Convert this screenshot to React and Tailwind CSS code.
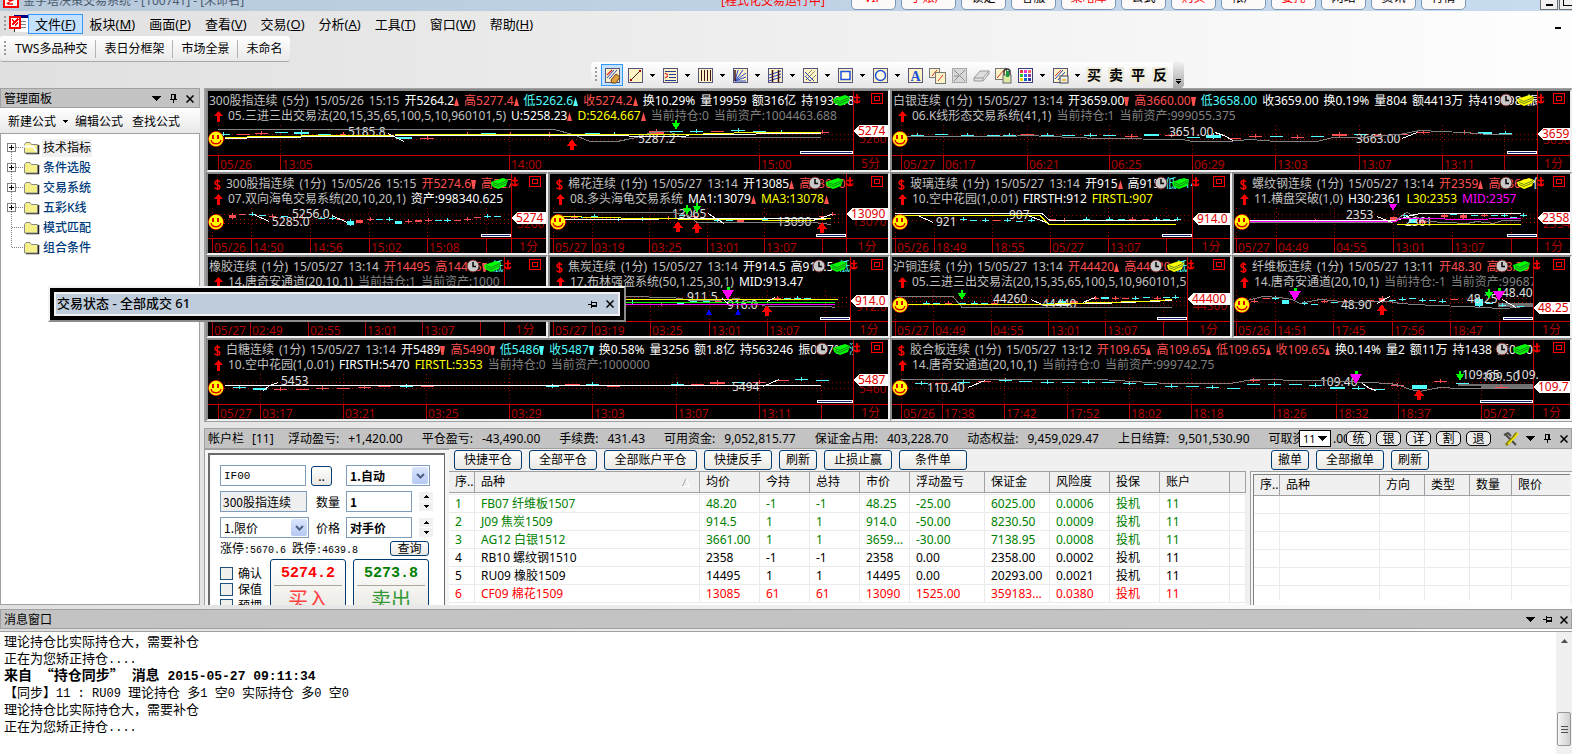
import React from "react";

const UI = "font-['Noto_Sans','Noto_Sans_CJK_SC',sans-serif]";
const SONG = "font-['Noto_Sans_CJK_SC',sans-serif]";

const R = "#ff5050";
const C = "#50ffff";
const W = "#ffffff";
const Y = "#ffff00";
const G = "#c0c0c0";
const D = "#808080";
const M = "#ff00ff";

/* ---------- small glyphs ---------- */

function Caret({ className = "" }) {
  return (
    <svg width="9" height="5" viewBox="0 0 9 5" className={className} shapeRendering="crispEdges">
      <path d="M0 0h9L4.500 5z" fill="#000" />
    </svg>
  );
}

function SmallCaret() {
  return (
    <svg width="5" height="3" viewBox="0 0 5 3" shapeRendering="crispEdges">
      <path d="M0 0h5L2.500 3z" fill="#000" />
    </svg>
  );
}

function Pin({ side = false }) {
  return (
    <svg width="9" height="9" viewBox="0 0 9 9" shapeRendering="crispEdges" className={side ? "rotate-90" : ""}>
      <path d="M2 0h5v5h1v1H5v3H4V6H1V5h1zM3 1v4h2V1z" fill="#000" fillRule="evenodd" />
    </svg>
  );
}

function Cross() {
  return (
    <svg width="8" height="8" viewBox="0 0 8 8">
      <path d="M0.500 0.500l7 7M7.500 0.500l-7 7" stroke="#000" strokeWidth="1.500" />
    </svg>
  );
}

function Grip({ className = "" }) {
  return (
    <svg width="3" height="16" viewBox="0 0 3 16" className={className} shapeRendering="crispEdges">
      {[0, 4, 8, 12].map((y) => (
        <rect key={y} x="0" y={y} width="2" height="2" fill="#9a9a9a" />
      ))}
    </svg>
  );
}

function PanelButtons({ side = false }) {
  return (
    <div className="flex items-center gap-2">
      <button aria-label="菜单"><Caret className="block" /></button>
      <button aria-label="固定"><Pin side={side} /></button>
      <button aria-label="关闭"><Cross /></button>
    </div>
  );
}

/* ---------- title bar ---------- */

const TITLE_BUTTONS = [
  ["VIP", true, false],
  ["子账户", true, true],
  ["锁定", false, false],
  ["客服", false, false],
  ["策略库", true, true],
  ["公式", false, false],
  ["购买", true, false],
  ["帐户", false, false],
  ["委托", true, false],
  ["网站", false, false],
  ["资讯", false, false],
  ["行情", false, false],
];

function TitleBar() {
  return (
    <header className="flex h-[11px] shrink-0 items-end justify-between overflow-hidden bg-linear-to-r from-[#b7c9db] to-[#c8dcf0] pb-px">
      <div className="flex items-end gap-1 pl-[3px]">
        <svg width="16" height="16" viewBox="0 0 16 16" className="mb-[2px] shrink-0">
          <rect x="1" y="1" width="14" height="14" fill="#fff" stroke="#f00" strokeWidth="2" />
          <path d="M4 12L11 5M4 6l3 3 5-2M5 12h5" stroke="#f00" strokeWidth="1.500" fill="none" />
        </svg>
        <h1 className="text-[12px] leading-[18px] whitespace-nowrap text-[#4a5a6c]">金字塔决策交易系统 - [100741] - [未命名]</h1>
      </div>
      <div className="flex items-end">
        <span className="mr-[26px] text-[12px] leading-[18px] whitespace-nowrap text-[#f00]">[程式化交易运行中]</span>
        <div className="mr-[74px] flex gap-[5px]">
          {TITLE_BUTTONS.map(([t, red, wide]) => (
            <button
              key={t}
              className={`h-[20px] rounded-[5px] border border-[#7b98b6] bg-[#fffafa] pb-1 text-[12px] leading-[14px] ${red ? "text-[#f00]" : "text-black"} ${wide ? "w-[55px]" : "w-[45px]"}`}
            >
              {t}
            </button>
          ))}
        </div>
        <div className="flex gap-px">
          <button aria-label="最小化" className="flex h-[18px] w-[18px] items-end justify-center border border-[#707070] bg-[#f0f0f0] pb-[3px]">
            <span className="h-[2px] w-[7px] bg-black" />
          </button>
          <button aria-label="还原" className="flex h-[18px] w-[13px] items-end justify-end overflow-hidden border border-r-0 border-[#707070] bg-[#f0f0f0] pb-[3px]">
            <span className="h-[7px] w-[9px] border border-r-0 border-black" />
          </button>
        </div>
      </div>
    </header>
  );
}

/* ---------- menus ---------- */

const MENUS = [
  ["文件", "F"], ["板块", "M"], ["画面", "P"], ["查看", "V"], ["交易", "O"],
  ["分析", "A"], ["工具", "T"], ["窗口", "W"], ["帮助", "H"],
];

function MenuBar() {
  return (
    <nav className="flex h-[25px] shrink-0 items-center pl-[4px]">
      <Grip />
      <svg width="19" height="17" viewBox="0 0 19 17" className="ml-[2px]" shapeRendering="crispEdges">
        <rect x="5" y="0" width="14" height="17" fill="#fff" stroke="#333" />
        <rect x="5" y="0" width="14" height="3" fill="#000080" />
        <path d="M12 6h5M12 9h5M12 12h5" stroke="#808080" />
        <rect x="1" y="2" width="10" height="11" fill="#fff" stroke="#f00" strokeWidth="2" />
        <path d="M3 10l6-6M3 5l3 2M6 10l3-2" stroke="#f00" strokeWidth="1.500" />
      </svg>
      {MENUS.map(([t, k], i) => (
        <button
          key={t}
          className={`h-[20px] border px-[6px] text-[13px] leading-[16px] whitespace-nowrap ${i === 0 ? "border-[#3399ff] bg-[#c4e1ff]" : "border-transparent"}`}
        >
          {t}(<u>{k}</u>)
        </button>
      ))}
      <span className="mt-[8px] mr-[11px] ml-auto h-[2px] w-[6px] bg-black" />
    </nav>
  );
}

function PageTabs() {
  const tabs = ["TWS多品种交", "表日分框架", "市场全景", "未命名"];
  return (
    <div className="flex h-[26px] shrink-0">
      <div className="flex items-center rounded-[3px] border-b border-[#a8a8a8] bg-linear-to-b from-white to-[#e9e9e9] pl-[4px]">
        <Grip />
        {tabs.map((t, i) => (
          <button
            key={t}
            className={`h-[18px] px-2 text-[12px] leading-[16px] whitespace-nowrap ${i > 0 ? "border-l border-[#b4b4b4]" : ""}`}
          >
            {t}
          </button>
        ))}
      </div>
    </div>
  );
}

/* ---------- drawing toolbar ---------- */

function Tool({ kind }) {
  const navy = "#3c3c78";
  const frame = <rect x="1.500" y="1.500" width="14" height="14" fill="#fdf3c4" stroke="#55557f" />;
  let art = null;
  switch (kind) {
    case "pencil":
      art = (<>{frame}<path d="M3 11l7-8M5 12l8-9" stroke="#2244cc" /><path d="M3 8l5-5" stroke="#e03030" strokeWidth="1.500" /><path d="M7 13l5-6 4 3-4 6H8z" fill="#e0a040" stroke="#6b4010" /></>);
      break;
    case "line":
      art = (<>{frame}<path d="M4 13L13 4" stroke="#402020" /><rect x="3" y="12" width="2" height="2" fill="#a00" /><rect x="12" y="3" width="2" height="2" fill="#a00" /></>);
      break;
    case "list":
      art = (<>{frame}<path d="M3 4.500h11M7 7.500h7M7 10.500h7M3 13.500h11" stroke="#223a9c" /><path d="M3 6l3 2M3 11l3-2" stroke="#e03030" strokeWidth="1.500" /></>);
      break;
    case "bars":
      art = (<>{frame}<path d="M4.500 3v11M7.500 3v11M10.500 3v11M13.500 3v11" stroke="#401018" /></>);
      break;
    case "fan":
      art = (<>{frame}<path d="M3 14L6 3M3 14L11 3M3 14L14 6M3 14l11-4M3 14h11" stroke="#2244cc" /><path d="M3 14L3 3" stroke="#401018" strokeWidth="1.500" /></>);
      break;
    case "grid":
      art = (<>{frame}<path d="M2 8l12-4M2 11l12-4M2 14l12-4" stroke="#2244cc" /><path d="M5.500 3v12M11.500 3v12" stroke="#401018" strokeWidth="1.500" /></>);
      break;
    case "hatch":
      art = (<>{frame}<path d="M3 10l7-7M4 13l9-9M8 14l6-6" stroke="#555" strokeDasharray="2 1" /><path d="M3 5l9 9M3 9l5 5" stroke="#2244cc" /></>);
      break;
    case "rect":
      art = (<>{frame}<rect x="4" y="4.500" width="9" height="8" fill="#fffbe6" stroke="#2050e0" strokeWidth="1.500" /></>);
      break;
    case "circle":
      art = (<>{frame}<circle cx="8.500" cy="8.500" r="5" fill="#fffbe6" stroke="#2050e0" strokeWidth="1.500" /></>);
      break;
    case "text":
      art = (<>{frame}<text x="8.500" y="13.500" textAnchor="middle" fontSize="14" fontWeight="bold" fill="#2050e0" className="font-['Liberation_Serif',serif]">A</text></>);
      break;
    case "copy":
      art = (<><rect x="0.500" y="1.500" width="10" height="9" fill="#fdf3c4" stroke="#777" /><path d="M3 9l5-6" stroke="#e03030" /><rect x="6.500" y="5.500" width="10" height="11" fill="#fdf3c4" stroke="#777" /><path d="M9 14l5-6" stroke="#e03030" /></>);
      break;
    case "delete":
      art = (<><rect x="1.500" y="1.500" width="14" height="14" fill="#d8d8d8" stroke="#a8a8a8" /><path d="M3 3l11 11M14 3L3 14M3 9h5" stroke="#8c8c8c" /></>);
      break;
    case "eraser":
      art = (<path d="M1 11l6-7h9l-6 7zM1 11v3h9v-3M10 14l6-7V4" fill="#dedede" stroke="#999" />);
      break;
    case "lock":
      art = (<><rect x="0.500" y="1.500" width="11" height="11" fill="#fdf3c4" stroke="#777" /><path d="M2 11l7-8" stroke="#e03030" /><path d="M9 9V5a3 3 0 016 0v4" fill="none" stroke="#333" strokeWidth="1.500" /><rect x="8" y="8" width="8" height="8" fill="#dfe8a0" stroke="#667" /><rect x="11" y="4" width="3" height="6" fill="#1a9a3a" /></>);
      break;
    case "palette":
      art = (<><rect x="1.500" y="1.500" width="14" height="14" fill="#fff" stroke={navy} />{[["#e33", "#e3c", "#f66"], ["#3b3", "#36e", "#939"], ["#fc0", "#06c", "#33a"]].flatMap((r, j) => r.map((c, i) => <rect key={`${i}${j}`} x={3 + i * 4} y={3 + j * 4} width="3" height="3" fill={c} />))}</>);
      break;
    default:
      art = (<>{frame}<path d="M3 12l8-9M6 13l7-8" stroke="#2244cc" /><path d="M3 9l6-6" stroke="#e03030" /><rect x="8" y="9" width="8" height="7" fill="#eee" stroke="#444" /><rect x="10" y="12" width="4" height="2" fill="#f0c040" /></>);
  }
  return <svg width="17" height="17" viewBox="0 0 17 17">{art}</svg>;
}

const TOOLS = [
  ["line", true], ["list", true], ["bars", true], ["fan", true], ["grid", true], ["hatch", true],
  ["rect", true], ["circle", true], ["text", false], ["copy", false], ["delete", false],
  ["eraser", false], ["lock", false], ["palette", true], ["save", true],
];

function DrawToolbar() {
  return (
    <div className="flex h-[26px] shrink-0 justify-end pr-[388px]">
      <div className="flex items-center overflow-hidden rounded-[4px] bg-linear-to-b from-white to-[#e6e6e6] pl-[4px]">
        <Grip />
        <button aria-label="pencil" className="ml-[3px] flex h-[22px] w-[22px] items-center justify-center border border-[#3399ff] bg-[#c4e1ff]">
          <Tool kind="pencil" />
        </button>
        {TOOLS.map(([k, drop]) => (
          <button key={k} aria-label={k} className={`flex h-[22px] items-center pl-[4px] ${drop ? "w-[35px] gap-[6px]" : "w-[22px]"}`}>
            <Tool kind={k} />
            {drop && <SmallCaret />}
          </button>
        ))}
        {["买", "卖", "平", "反"].map((t) => (
          <button key={t} className="flex h-[22px] w-[22px] items-center justify-center">
            <span className="h-[16px] w-[16px] bg-[#efecdc] text-center text-[14px] leading-[16px] font-bold">{t}</span>
          </button>
        ))}
        <button aria-label="更多" className="ml-[2px] flex h-full w-[11px] flex-col items-center justify-end gap-px bg-linear-to-b from-[#f0f0f0] to-[#a8a8a8] pb-1">
          <span className="h-px w-[5px] bg-black" />
          <SmallCaret />
        </button>
      </div>
    </div>
  );
}

/* ---------- management panel ---------- */

const TREE = [
  ["技术指标", true, true],
  ["条件选股", true, false],
  ["交易系统", true, false],
  ["五彩K线", true, false],
  ["模式匹配", false, false],
  ["组合条件", false, false],
];

function Folder({ open }) {
  return (
    <svg width="17" height="14" viewBox="0 0 17 14">
      <path d="M3 12.500h12.500V4" fill="none" stroke="#222" strokeWidth="1.500" />
      <path d="M1.500 12V3.500l1.500-2h4l1.500 2h6V12z" fill="#f5f08a" stroke="#8a8a8a" />
      {open && <path d="M1 5.500h9l3.500 5" fill="none" stroke="#fff" strokeWidth="2" />}
    </svg>
  );
}

function SidePanel() {
  return (
    <aside className="flex w-[200px] shrink-0 flex-col">
      <div className="flex h-[20px] items-center justify-between border border-[#a0a0a0] bg-[#c3c3c3] pt-px pr-[5px] pl-[3px] text-[12px]">
        <h2>管理面板</h2>
        <PanelButtons />
      </div>
      <div className="flex h-[25px] items-center bg-linear-to-b from-white to-[#e8e8e8] pt-[2px] pl-2 text-[12px]">
        <button>新建公式</button>
        <button aria-label="新建选项" className="mr-[7px] ml-[7px]"><SmallCaret /></button>
        <button>编辑公式</button>
        <button className="ml-[9px]">查找公式</button>
      </div>
      <ul className="min-h-0 flex-1 border border-[#a0a0a0] bg-white pt-[4px] text-[12px]">
        {TREE.map(([t, exp, sel], i) => (
          <li key={t} className="flex h-[20px] items-center">
            <svg width="22" height="20" viewBox="0 0 22 20" className="shrink-0" shapeRendering="crispEdges">
              <path d={`M10.500 ${i === 0 ? 10 : 0}V${i === TREE.length - 1 ? 10 : 20}M11 9.500h11`} stroke="#808080" strokeDasharray="1 1" fill="none" />
              {exp && (<><rect x="6.500" y="5.500" width="8" height="8" fill="#fff" stroke="#808080" /><path d="M8 9.500h5M10.500 7v5" stroke="#000" /></>)}
            </svg>
            <Folder open={sel} />
            <span className={`ml-[2px] px-[1px] leading-[18px] ${sel ? "bg-[#f0f0f0] text-black" : "font-medium text-[#003c7c]"}`}>{t}</span>
          </li>
        ))}
      </ul>
    </aside>
  );
}

/* ---------- charts ---------- */

// Candle rows: [x, y, colour key, width?, height?]
const SYS53 = "05.三进三出交易法(20,15,35,65,100,5,10,960101,5)";

const PANES = [
  {
    id: "if5", wide: true, w: 684, line: 647, unit: "5分", bar: 53, tag: ["5274", 42], ghost: ["5260", 50], book: "#00ff00",
    head: [["300股指连续", G], ["(5分)", G], ["15/05/26", G], ["15:15", G], ["开5264.2", W, "u"], ["高5277.4", R, "u"], ["低5262.6", C, "u", C], ["收5274.2", R, "u"], ["换10.29%", W], ["量19959", W], ["额316亿", W], ["持193918", W]],
    sub: [[SYS53, G], ["U:5258.23", W, "u"], ["D:5264.667", Y, "u"], ["当前持仓:0", D], ["当前资产:1004463.688", D]],
    ticks: [[12, "05/26"], [74, "13:05"], [303, "14:00"], [553, "15:00"]],
    grid: [45, 50],
    lines: [
      [D, "12,40 348,40 367,45 384,52 411,52 431,48 442,44 452,42 463,42 474,47 477,48 615,48"],
      [W, "19,49 64,48 127,47 252,46 367,46 478,47 485,45 615,44"],
      [Y, "19,48 64,47 127,46 252,45 454,45 482,45 544,43 615,43"],
      [W, "182,44 198,52"],
    ],
    candles: [[17, 45, "c"], [37, 45, "r"], [55, 44, "r"], [75, 43, "c"], [95, 43, "c", 15, 2], [118, 45, "c"], [137, 45, "r", 6], [198, 48, "c", 16, 2], [221, 49, "r", 14], [238, 45, "r"], [261, 45, "r"], [282, 44, "c", 15], [304, 45, "r"], [324, 45, "r"], [343, 45, "r", 15, 2], [386, 44, "c", 15, 2], [408, 45, "c", 6], [428, 45, "r"], [450, 42, "r", 15, 3], [470, 42, "c"], [490, 42, "c"], [511, 42, "r"], [532, 41, "c", 14], [553, 42, "c"], [575, 43, "c"], [594, 43, "r"], [616, 43, "r"]],
    labels: [["5185.8", 142, 43], ["5287.2", 432, 50]],
    marks: [["ru", 366, 56], ["gd", 470, 36]],
  },
  {
    id: "ag", wide: true, w: 682, line: 647, unit: "1分", bar: 30, tag: ["3659", 45], ghost: ["3650", 51], book: "#ffff00", clock: true,
    head: [["白银连续", G], ["(1分)", G], ["15/05/27", G], ["13:14", G], ["开3659.00", W, "d"], ["高3660.00", R, "d"], ["低3658.00", C], ["收3659.00", W], ["换0.19%", W], ["量804", W], ["额4413万", W], ["持419198", W], ["振", W]],
    sub: [["06.K线形态交易系统(41,1)", G], ["当前持仓:1", D], ["当前资产:999055.375", D]],
    ticks: [[11, "05/27"], [53, "06:17"], [137, "06:21"], [219, "06:25"], [302, "06:29"], [385, "13:03"], [469, "13:07"], [552, "13:11"], [614, ""]],
    grid: [45, 50],
    lines: [
      [D, "13,47 117,47 137,46 183,48 210,49 293,50 302,52 337,52 360,50 387,52 427,52 443,48 470,48 510,45 530,41 573,43 600,45 622,45"],
      [W, "325,43 334,46 343,51"],
      [W, "512,49 527,43"],
    ],
    candles: [[27, 46, "c"], [51, 45, "c"], [77, 46, "c"], [103, 46, "c"], [119, 46, "c"], [137, 45, "r"], [157, 46, "c"], [178, 46, "c"], [200, 46, "c"], [219, 46, "c"], [241, 47, "r"], [261, 45, "c", 15, 2], [281, 46, "r"], [303, 48, "c"], [323, 46, "c", 15, 3], [344, 49, "r"], [365, 47, "r"], [386, 47, "c"], [407, 48, "r"], [427, 47, "c"], [449, 45, "r", 15, 2], [470, 45, "c"], [490, 46, "r"], [511, 45, "r"], [533, 43, "r"], [553, 42, "c"], [574, 43, "r"], [595, 43, "c", 14, 2], [615, 44, "c"]],
    labels: [["3651.00", 279, 43], ["3663.00", 466, 50]],
    marks: [],
  },
  {
    id: "if1", w: 342, dollar: true, line: 305, unit: "1分", bar: 30, tag: ["5274", 46], ghost: ["5260", 52], book: "#00ff00",
    head: [["300股指连续", G], ["(1分)", G], ["15/05/26", G], ["15:15", G], ["开5274.6", R, "d"], ["高5277", R]],
    sub: [["07.双向海龟交易系统(20,10,20,1)", G], ["资产:998340.625", W]],
    ticks: [[6, "05/26"], [45, "14:50"], [104, "14:56"], [163, "15:02"], [221, "15:08"], [280, ""]],
    grid: [42, 47, 51],
    lines: [[W, "48,42 63,49"], [W, "126,43 141,50"]],
    candles: [[26, 43, "r", 7, 3], [36, 42, "r"], [46, 42, "c"], [56, 43, "c"], [66, 44, "r"], [78, 44, "c"], [96, 45, "r"], [115, 46, "c"], [126, 46, "c"], [134, 47, "r"], [144, 49, "c", 7, 4], [153, 48, "r", 7, 3], [164, 47, "r"], [173, 47, "c"], [183, 47, "c"], [192, 49, "c", 7, 3], [202, 49, "r"], [212, 48, "r", 7, 2], [222, 48, "r"], [232, 48, "c"], [241, 48, "c"], [251, 48, "r"], [261, 47, "r"], [271, 45, "r"], [281, 44, "c"], [291, 44, "c"]],
    labels: [["5256.0", 86, 42], ["5285.0", 66, 50]],
    marks: [],
  },
  {
    id: "cf", w: 342, dollar: true, line: 298, unit: "1分", bar: 30, tag: ["13090", 42], ghost: ["13070", 50], book: "#00ff00", clock: true,
    head: [["棉花连续", G], ["(1分)", G], ["15/05/27", G], ["13:14", G], ["开13085", W, "u"], ["高13090", R, "u"]],
    sub: [["08.多头海龟交易系统", G], ["MA1:13079", W, "u"], ["MA3:13078", Y, "u"]],
    ticks: [[5, "05/27"], [44, "03:19"], [101, "03:25"], [159, "13:01"], [216, "13:07"], [274, ""]],
    grid: [42, 46, 50],
    lines: [
      [D, "5,40 124,40 140,43 149,50 265,50 283,52"],
      [W, "15,47 92,47 130,46 283,46"],
      [Y, "15,44 92,46 165,47 262,48 283,46"],
      [W, "160,41 176,51"],
      [W, "265,48 284,42"],
    ],
    candles: [[26, 45, "r"], [36, 45, "c"], [46, 44, "c"], [58, 45, "r"], [70, 47, "c"], [82, 47, "c"], [94, 47, "c"], [104, 46, "c"], [120, 46, "r"], [134, 43, "c"], [146, 44, "r"], [158, 46, "r"], [169, 48, "c"], [181, 48, "c"], [192, 48, "r", 7, 2], [204, 47, "r"], [216, 47, "c"], [228, 48, "c"], [240, 48, "c"], [274, 44, "r"], [284, 42, "r"]],
    labels: [["13065", 124, 42], ["13090", 229, 50]],
    marks: [["gd", 139, 38], ["gd", 149, 36], ["ru", 130, 55], ["ru", 149, 56], ["ru", 274, 56]],
  },
  {
    id: "fg", w: 342, dollar: true, line: 302, unit: "1分", bar: 30, tag: ["914.0", 47], book: "#00ff00", clock: true,
    head: [["玻璃连续", G], ["(1分)", G], ["15/05/27", G], ["13:14", G], ["开915", W, "u"], ["高915", W], ["低914", C]],
    sub: [["10.空中花园(1,0.01)", G], ["FIRSTH:912", W], ["FIRSTL:907", Y]],
    ticks: [[5, "05/26"], [44, "18:49"], [102, "18:55"], [160, "05/27"], [218, "13:07"], [276, ""]],
    grid: [43, 48],
    lines: [
      [W, "5,41 152,41 160,48 286,48"],
      [Y, "5,43 150,43 159,52 286,52"],
      [W, "28,43 43,50"],
      [W, "138,43 159,51"],
    ],
    candles: [[73, 47, "c"], [83, 48, "c"], [95, 48, "c"], [106, 48, "r"], [117, 48, "c"], [129, 49, "c"], [141, 48, "c"], [162, 47, "r"], [174, 48, "r"], [185, 48, "r"], [196, 47, "c"], [208, 48, "r"], [219, 47, "c"], [231, 47, "c"], [242, 47, "r"], [255, 47, "r"], [266, 47, "c"], [276, 47, "c"], [287, 47, "c"]],
    labels: [["921", 46, 50], ["907", 119, 43]],
    marks: [],
  },
  {
    id: "rb", w: 340, dollar: true, line: 305, unit: "1分", bar: 30, tag: ["2358", 46], ghost: ["2354", 52], book: "#ffff00", clock: true,
    head: [["螺纹钢连续", G], ["(1分)", G], ["15/05/27", G], ["13:14", G], ["开2359", R, "u"], ["高2360", R], ["低", W]],
    sub: [["11.横盘突破(1,0)", G], ["H30:2361", W], ["L30:2353", Y], ["MID:2357", M]],
    ticks: [[4, "05/27"], [44, "04:49"], [102, "04:55"], [161, "13:01"], [220, "13:07"], [279, ""]],
    grid: [42, 46, 50],
    lines: [
      [D, "15,50 160,50 175,40 195,49 235,51 245,49 262,51 270,48 289,48"],
      [W, "15,48 165,48 175,44 188,41 289,41"],
      [Y, "165,52 289,52"],
      [M, "15,49 163,49 168,46 200,46 225,47 289,46"],
      [W, "145,44 160,50"],
    ],
    candles: [[83, 49, "r"], [161, 45, "r", 7, 5], [172, 43, "c"], [181, 47, "c", 8, 4], [190, 48, "r", 7, 3], [202, 46, "r"], [212, 43, "r", 7, 2], [221, 42, "c"], [231, 43, "r", 7, 3], [242, 43, "c"], [252, 43, "r"], [262, 43, "c"], [272, 43, "c"], [281, 45, "c"], [291, 43, "c"]],
    labels: [["2353", 114, 43], ["2361", 173, 50]],
    marks: [["md", 161, 36]],
  },
  {
    id: "ru", w: 342, line: 298, unit: "1分", bar: 30, tag: ["14495", 44], book: "#00ff00", clock: true,
    head: [["橡胶连续", G], ["(1分)", G], ["15/05/27", G], ["13:14", G], ["开14495", R], ["高14495", R, "d"], ["低", C]],
    sub: [["14.唐奇安通道(20,10,1)", G], ["当前持仓:1", D], ["当前资产:1000", D]],
    ticks: [[6, "05/27"], [44, "02:49"], [102, "02:55"], [159, "13:01"], [216, "13:07"], [274, ""]],
    grid: [42, 48], lines: [[D, "6,42 280,42"]], candles: [], labels: [], marks: [],
  },
  {
    id: "j", w: 342, dollar: true, line: 302, unit: "1分", bar: 30, tag: ["914.0", 46], ghost: ["912.0", 52], book: "#00ff00", clock: true,
    head: [["焦炭连续", G], ["(1分)", G], ["15/05/27", G], ["13:14", G], ["开914.5", W], ["高914.5", W], ["低9", C]],
    sub: [["17.布林强盗系统(50,1.25,30,1)", G], ["MID:913.47", W]],
    ticks: [[5, "05/27"], [44, "03:19"], [102, "03:25"], [161, "13:01"], [219, "13:07"], [277, ""]],
    grid: [42, 47, 51],
    lines: [
      [D, "76,41 125,42 145,45 168,45 190,43 219,51 250,51 280,51 287,52"],
      [Y, "76,44 290,44"],
      ["#00ff00", "76,47 287,47"],
      [M, "76,49 287,49"],
      [W, "174,43 180,48"],
      [W, "219,46 227,42"],
    ],
    candles: [[84, 47, "c"], [98, 49, "r"], [113, 49, "r"], [132, 48, "c"], [145, 46, "c"], [158, 46, "c"], [170, 46, "r"], [219, 44, "r"], [229, 43, "r", 8, 2], [239, 43, "c"], [249, 43, "c"], [259, 43, "c"]],
    labels: [["911.5", 139, 42], ["916.0", 179, 50]],
    marks: [["md2", 180, 39], ["bu", 161, 57], ["bu", 190, 57], ["ru", 219, 56]],
  },
  {
    id: "cu", w: 342, line: 297, unit: "1分", bar: 30, tag: ["44400", 44], ghost: ["44300", 51], book: "#ffff00", clock: true,
    head: [["沪铜连续", G], ["(1分)", G], ["15/05/27", G], ["13:14", G], ["开44420", R, "u"], ["高44420", R], ["低", C]],
    sub: [[SYS53, G]],
    ticks: [[5, "05/27"], [43, "04:49"], [101, "04:55"], [158, "13:01"], [215, "13:07"], [273, ""]],
    grid: [42, 46, 50],
    lines: [
      [D, "5,41 63,41 72,52 282,52"],
      [W, "13,49 150,49 210,48 282,45"],
      [Y, "13,49 150,49 210,47 253,46 282,44"],
      [W, "141,44 152,49"],
      [W, "193,47 205,42"],
    ],
    candles: [[36, 48, "c"], [46, 48, "c"], [58, 48, "r"], [72, 48, "c"], [84, 48, "c"], [94, 48, "c"], [104, 48, "r"], [160, 48, "c"], [172, 46, "c", 8, 3], [184, 46, "r", 8, 3], [205, 43, "r"], [215, 42, "c", 8, 2], [225, 43, "r"], [235, 43, "r"], [245, 43, "c"], [256, 42, "c"], [267, 43, "r"], [276, 42, "c"], [285, 42, "c"]],
    labels: [["44260", 103, 44], ["44440", 152, 49]],
    marks: [["gd", 72, 40]],
  },
  {
    id: "fb", w: 340, dollar: true, line: 301, unit: "1分", bar: 30, tag: ["48.25", 53], book: "#00ff00", clock: true,
    head: [["纤维板连续", G], ["(1分)", G], ["15/05/27", G], ["13:11", G], ["开48.30", R], ["高48.30", R], ["低4", C]],
    sub: [["14.唐奇安通道(20,10,1)", G], ["当前持仓:-1", D], ["当前资产:99687", D]],
    ticks: [[4, "05/26"], [43, "14:51"], [101, "17:45"], [160, "17:56"], [218, "18:47"], [267, ""]],
    grid: [43, 47],
    block: [[266, 48, 35, 4]],
    lines: [
      [D, "5,46 15,45 31,41 48,42 60,44 68,48 88,44 101,45 115,47 158,46 168,48 201,50 235,51 268,53 288,52"],
      [W, "145,48 158,41"],
      [W, "270,44 284,52"],
    ],
    candles: [[22, 46, "r"], [34, 43, "r"], [43, 43, "c"], [53, 45, "c", 7, 4], [72, 48, "c"], [82, 49, "c"], [92, 46, "r"], [102, 47, "c"], [112, 46, "r"], [138, 45, "r"], [150, 43, "r", 6, 4], [160, 45, "c"], [170, 44, "c"], [180, 43, "c"], [190, 45, "c"], [200, 45, "c"], [210, 46, "c"], [222, 44, "r"], [247, 44, "c", 8, 7], [257, 48, "c"], [270, 50, "c"], [288, 51, "c"]],
    labels: [["48.90", 109, 50], ["48.25", 235, 44], ["48.40", 270, 38]],
    marks: [["md2", 63, 40], ["ru", 150, 55], ["gd", 257, 39], ["md2", 267, 40]],
  },
  {
    id: "sr", wide: true, w: 684, dollar: true, line: 647, unit: "1分", bar: 36, tag: ["5487", 42], ghost: ["5460", 51], book: "#00ff00", clock: true,
    head: [["白糖连续", G], ["(1分)", G], ["15/05/27", G], ["13:14", G], ["开5489", W, "d"], ["高5490", R, "d"], ["低5486", C, "d", C], ["收5487", C, "d", C], ["换0.58%", W], ["量3256", W], ["额1.8亿", W], ["持563246", W], ["振0.67%", W], ["涨", C]],
    sub: [["10.空中花园(1,0.01)", G], ["FIRSTH:5470", W], ["FIRSTL:5353", Y], ["当前持仓:0", D], ["当前资产:1000000", D]],
    ticks: [[12, "05/27"], [54, "03:17"], [137, "03:21"], [220, "03:25"], [303, "03:29"], [386, "13:03"], [470, "13:07"], [553, "13:11"], [615, ""]],
    grid: [44, 50],
    lines: [[W, "19,47 615,47"], [W, "57,52 64,47 72,44"], [W, "557,48 573,41"]],
    candles: [[33, 49, "c"], [54, 50, "c", 14, 2], [74, 51, "r"], [96, 51, "r"], [116, 50, "r"], [137, 50, "r"], [158, 49, "r"], [178, 48, "r"], [200, 48, "c"], [221, 48, "r"], [346, 48, "c"], [366, 46, "r", 15, 2], [386, 46, "c"], [407, 48, "r"], [471, 46, "c"], [491, 46, "r"], [511, 44, "r", 15, 2], [532, 44, "c"], [553, 44, "r"], [576, 42, "r"], [595, 41, "c"], [616, 42, "c"]],
    labels: [["5453", 75, 43], ["5494", 526, 49]],
    marks: [],
  },
  {
    id: "bb", wide: true, w: 682, dollar: true, line: 643, unit: "1分", bar: 53, tag: ["109.7", 49], book: "#00ff00", clock: true,
    head: [["胶合板连续", G], ["(1分)", G], ["15/05/27", G], ["13:12", G], ["开109.65", R, "u"], ["高109.65", R, "u"], ["低109.65", R, "u"], ["收109.65", R, "u"], ["换0.14%", W], ["量2", W], ["额11万", W], ["持1438", W], ["振0.00%", W]],
    sub: [["14.唐奇安通道(20,10,1)", G], ["当前持仓:0", D], ["当前资产:999742.75", D]],
    ticks: [[11, "05/26"], [52, "17:38"], [114, "17:42"], [177, "17:52"], [239, "18:02"], [301, "18:18"], [384, "18:26"], [446, "18:32"], [508, "18:37"], [591, "05/27"]],
    grid: [44, 50],
    block: [[568, 46, 75, 2], [591, 46, 52, 5]],
    lines: [
      [D, "11,41 95,41 210,41 277,45 340,45 363,41 423,42 477,44 500,45 510,47 520,51 530,53 550,49 570,50 643,50"],
      [W, "78,49 95,42"],
      [W, "472,45 480,50 486,52"],
    ],
    candles: [[31, 45, "c"], [51, 45, "r"], [73, 44, "c"], [94, 43, "r"], [115, 42, "c"], [135, 43, "c"], [157, 44, "c"], [178, 44, "c"], [198, 44, "c"], [218, 44, "c"], [239, 45, "c"], [260, 46, "c"], [281, 48, "c"], [302, 48, "c"], [322, 49, "c"], [343, 50, "c"], [363, 42, "r"], [363, 46, "c"], [384, 46, "c"], [405, 46, "c"], [425, 47, "c"], [447, 49, "c", 15, 2], [468, 50, "c"], [488, 51, "c"], [507, 47, "r"], [529, 47, "c", 15, 4], [550, 43, "r"], [572, 45, "c"], [611, 49, "r"]],
    labels: [["110.40", 37, 50], ["109.40", 430, 44], ["109.65", 572, 37], ["109.50", 592, 39], ["109.", 625, 37]],
    marks: [["md2", 466, 40], ["ru", 529, 57], ["gd", 570, 38]],
  },
];

function Trend({ dir, color = R }) {
  return (
    <svg width="5" height="9" viewBox="0 0 5 9" className="inline-block shrink-0">
      {dir === "u" ? <path d="M2.500 0L5 9H0z" fill={color} /> : <path d="M0 0h5L3.500 9h-2z" fill={color} />}
    </svg>
  );
}

function Quote({ items }) {
  return items.map(([t, color, dir, dc], i) => (
    <span key={i} className="inline-flex shrink-0 items-center whitespace-nowrap" style={{ color }}>
      {t}
      {dir && <Trend dir={dir} color={dc} />}
    </span>
  ));
}

function Mark({ kind, x, y }) {
  if (kind === "ru") return <path d={`M${x} ${y - 6}l5 7h-3v4h-4v-4h-3z`} fill="#f00" />;
  if (kind === "bu") return <path d={`M${x} ${y - 3}l3 6h-6z`} fill="#00f" />;
  if (kind === "gd") return <path d={`M${x - 1} ${y - 5}h2v3h3l-4 7-4-7h3z`} fill="#0f0" />;
  if (kind === "md") return <path d={`M${x - 4} ${y - 4}h8l-4 7z`} fill={M} />;
  return (
    <g>
      <rect x={x - 1} y={y - 7} width="3" height="3" fill="#0f0" />
      <path d={`M${x - 6} ${y - 4}h12l-6 10z`} fill={M} />
    </g>
  );
}

function Smiley() {
  return (
    <g shapeRendering="auto">
      <circle cx="10" cy="50" r="7.500" fill="#ff0" stroke="#f00" strokeDasharray="2 1" />
      <rect x="6" y="46" width="2" height="4" fill="#d00" />
      <rect x="11" y="46" width="2" height="4" fill="#d00" />
      <path d="M5 51c1 5 9 5 10 0" stroke="#d00" fill="none" strokeWidth="1.300" />
    </g>
  );
}

function ChartPane({ p }) {
  const dw = p.wide ? 13 : 7;
  const right = p.w - 2;
  return (
    <article className={`relative h-[83px] min-w-0 overflow-hidden border-t-2 border-r-2 border-b-2 border-l-2 border-t-[#8a8a8a] border-r-[#f0f0f0] border-b-[#f0f0f0] border-l-[#8a8a8a] bg-black text-[12px] ${p.wide ? "col-span-2" : ""}`}>
      <svg width={p.w - 2} height="81" viewBox={`2 2 ${p.w - 2} 81`} className="absolute top-0 left-0" shapeRendering="crispEdges">
        {p.grid.map((y) => (
          <path key={y} d={`M10 ${y + 0.5}H${p.line}`} stroke="#a00000" strokeDasharray="1 3" />
        ))}
        {p.ticks.map(([x, t]) => (
          <g key={x}>
            <path d={`M${x + 0.5} 36V66`} stroke="#a00000" strokeDasharray="1 3" />
            <path d={`M${x + 0.5} 66V82`} stroke="#b80000" />
            {t && <text x={x + 2} y="80" fill="#b00000">{t}</text>}
          </g>
        ))}
        <path d={`M2 66.500H${right}M${p.line + 0.5} 2V82`} stroke="#c80000" />
        {(p.block || []).map(([x, y, w, h]) => (
          <rect key={x} x={x} y={y} width={w} height={h} fill="#707070" />
        ))}
        {p.candles.map(([x, y, c, w = dw, h = 1], i) => (
          <g key={i} fill={c === "c" ? C : R}>
            <rect x={x - (w >> 1)} y={y} width={w} height={h} />
            {i % 2 === 0 && <rect x={x} y={y - 2} width="1" height={h + 3} />}
          </g>
        ))}
        {p.labels.map(([t, x, y]) => (
          <text key={t + x} x={x} y={y + 4} fill="#e0e0e0">{t}</text>
        ))}
        {p.lines.map(([c, pts], i) => (
          <polyline key={i} points={pts} transform="translate(0 0.5)" stroke={c} fill="none" />
        ))}
        {p.marks.map(([k, x, y], i) => (
          <Mark key={i} kind={k} x={x} y={y} />
        ))}
        <Smiley />
        <rect x={p.line - p.bar} y="62" width={p.bar} height="3" fill="#fff" />
        <rect x={p.line - p.bar + 1} y="63" width={p.bar - 2} height="1" fill="#10206c" />
        {p.ghost && <text x={p.line + 6} y={p.ghost[1] + 4} fill="#a00000">{p.ghost[0]}</text>}
        <path d={`M${p.line} ${p.tag[1]}l6-6H${right}v12H${p.line + 6}z`} fill="#fff" />
        <text x={p.line + 5} y={p.tag[1] + 4} fill="#e00000">{p.tag[0]}</text>
        <text x={(p.line + right) / 2} y="79" textAnchor="middle" fill="#b00000">{p.unit}</text>
      </svg>
      <div className="flex h-[18px] items-center gap-[5px] overflow-hidden pt-[2px] pl-px" style={{ width: p.line - 2 }}>
        {p.dollar && (
          <svg width="10" height="13" viewBox="0 0 10 13" className="ml-[3px] -mr-px shrink-0">
            <path d="M8 4C7 2 2.500 2.500 3 5s5 1.500 5 4-4.500 2.500-5.500 0.500M5.500 1v11" stroke="#f00" fill="none" strokeWidth="1.400" />
          </svg>
        )}
        <Quote items={p.head} />
      </div>
      <div className="flex h-[14px] items-center gap-[5px] overflow-hidden pl-[6px]" style={{ width: p.line - 2 }}>
        <svg width="9" height="11" viewBox="0 0 9 11" className="shrink-0">
          <path d="M4.500 0L9 5H6v6H3V5H0z" fill="#f00" />
        </svg>
        <Quote items={p.sub} />
      </div>
      <svg width={p.w - 2} height="18" viewBox={`2 2 ${p.w - 2} 18`} className="absolute top-0 left-0">
        {p.clock && (
          <g>
            <circle cx={p.line - 31} cy="11" r="6" fill="#c8c8c8" stroke="#702020" />
            <path d={`M${p.line - 31} 7v4.500h3`} stroke="#000" fill="none" strokeWidth="1.500" />
          </g>
        )}
        <path d={`M${p.line - 20} 10l12-4 5 2-2 6-8 3-6-3z`} fill={p.book} />
        <path d={`M${p.line - 18} 12.500l5 2 9-4M${p.line - 18} 10.500l5 2 9-4`} stroke="#285028" fill="none" strokeWidth="0.700" />
        <path d={`M${p.line + 1} 8.500h6M${p.line + 4} 5v9M${p.line + 1} 11.500c1 3 5 3 6 0`} stroke="#f00" fill="none" strokeWidth="1.600" />
        <g fill="none" stroke="#f00" shapeRendering="crispEdges">
          <rect x={right - 16.5} y="4.500" width="11" height="10" />
          <rect x={right - 13.5} y="7.500" width="5" height="4" />
        </g>
      </svg>
    </article>
  );
}

/* ---------- account area ---------- */

const ACCOUNT = [
  ["浮动盈亏:", "+1,420.00"],
  ["平仓盈亏:", "-43,490.00"],
  ["手续费:", "431.43"],
  ["可用资金:", "9,052,815.77"],
  ["保证金占用:", "403,228.70"],
  ["动态权益:", "9,459,029.47"],
  ["上日结算:", "9,501,530.90"],
  ["可取资金:", ""],
];

function AccountBar() {
  return (
    <div className="flex h-[21px] shrink-0 items-center border border-[#a0a0a0] bg-[#c3c3c3] pr-[3px] pl-[3px] text-[12px]">
      <div className="flex min-w-0 flex-1 overflow-hidden whitespace-nowrap">
        <span className="w-[44px] shrink-0">帐户栏</span>
        <span className="w-[36px] shrink-0">[11]</span>
        <span className="flex gap-[19px]">
          {ACCOUNT.map(([k, v]) => (
            <span key={k} className="flex shrink-0 gap-[9px]">
              <span>{k}</span>
              <span>{v}</span>
            </span>
          ))}
        </span>
      </div>
      <div className="relative shrink-0">
        <select aria-label="帐户" className="block h-[17px] w-[32px] appearance-none border border-black bg-white pl-[3px] text-[11px] leading-[14px]">
          <option>11</option>
        </select>
        <Caret className="pointer-events-none absolute top-[6px] right-[4px]" />
      </div>
      <span className="w-[15px] shrink-0 overflow-hidden pl-[2px]">.00</span>
      <div className="flex shrink-0 gap-[5px]">
        {["统", "银", "详", "割", "退"].map((t) => (
          <button key={t} className="h-[15px] w-[25px] rounded-[5px] border border-black bg-[#ececec] text-[12px] leading-[12px]">{t}</button>
        ))}
      </div>
      <button aria-label="设置" className="mr-[7px] ml-[12px] shrink-0">
        <svg width="16" height="14" viewBox="0 0 16 14">
          <path d="M1 3l4-2 3 3M3 3l10 10" stroke="#4a4a4a" strokeWidth="2" fill="none" />
          <path d="M14 1l-3 4-8 8" stroke="#808000" strokeWidth="3" fill="none" />
          <path d="M15 1l-3 4-7 7" stroke="#ffee00" strokeWidth="1.500" fill="none" />
        </svg>
      </button>
      <PanelButtons />
    </div>
  );
}

const XP = "rounded-[3px] border border-[#003c74] bg-linear-to-b from-white to-[#e8e7e2] text-[12px]";
const BOX = "border border-[#7f9db9] bg-white";

function Spin({ label }) {
  return (
    <div className="flex w-[14px] flex-col gap-px">
      <button aria-label={`${label}增加`} className="flex h-[9px] items-center justify-center bg-[#f0f0f0]"><span className="rotate-180"><SmallCaret /></span></button>
      <button aria-label={`${label}减少`} className="flex h-[9px] items-center justify-center bg-[#f0f0f0]"><SmallCaret /></button>
    </div>
  );
}

function XpSelect({ label, value, className = "" }) {
  return (
    <div className="relative">
      <select aria-label={label} className={`block h-[21px] w-full appearance-none pl-[3px] text-[12px] leading-[16px] ${BOX} ${className}`}>
        <option>{value}</option>
      </select>
      <span className="pointer-events-none absolute top-[2px] right-[2px] flex h-[17px] w-[16px] items-center justify-center rounded-[2px] bg-linear-to-b from-[#dbe6fd] to-[#b5c9f3]">
        <svg width="9" height="6" viewBox="0 0 9 6"><path d="M1 1l3.500 3.500L8 1" stroke="#4d6185" strokeWidth="2" fill="none" /></svg>
      </span>
    </div>
  );
}

function OrderForm() {
  return (
    <form className="w-[245px] shrink-0 overflow-hidden border-t border-l border-[#a0a0a0] bg-[#f5f5f5] pt-[3px] pr-[4px] pl-[3px]" onSubmit={(e) => e.preventDefault()}>
      <div className={`h-[160px] border-t-2 border-l-2 border-r border-[#6a6a6a] bg-white pt-[10px] pl-[10px] text-[12px] ${SONG}`}>
        <div className="grid w-[212px] grid-cols-[88px_32px_70px_14px] items-center gap-x-[3px] gap-y-[5px]">
          <input aria-label="合约" defaultValue="IF00" className={`h-[21px] w-[86px] px-[3px] ${BOX} font-['Liberation_Mono',monospace] text-[11px]`} />
          <button aria-label="选择合约" className={`h-[20px] w-[21px] justify-self-start ${XP}`}>..</button>
          <div className="col-span-2 w-[84px]"><XpSelect label="方式" value="1.自动" className="font-bold" /></div>
          <input aria-label="合约名称" readOnly defaultValue="300股指连续" className="h-[21px] w-[87px] border border-[#7f9db9] bg-[#efefef] px-[2px]" />
          <label htmlFor="qty" className="pl-[5px]">数量</label>
          <input id="qty" defaultValue="1" className={`h-[21px] w-[66px] px-[3px] font-bold ${BOX}`} />
          <Spin label="数量" />
          <div className="w-[89px]"><XpSelect label="价格类型" value="1.限价" /></div>
          <label htmlFor="price" className="pl-[5px]">价格</label>
          <input id="price" defaultValue="对手价" className={`h-[21px] w-[66px] px-[3px] font-bold ${BOX}`} />
          <Spin label="价格" />
        </div>
        <div className="mt-[2px] flex h-[16px] w-[209px] items-center justify-between">
          <span className="leading-[16px]"><Song text="涨停:5670.6 跌停:4639.8" size="text-[10px]" /></span>
          <button className={`h-[15px] w-[39px] leading-[12px] ${XP}`}>查询</button>
        </div>
        <div className="mt-[3px] flex w-[209px] justify-between">
          <div className="flex flex-col pt-[6px]">
            {["确认", "保值", "预埋"].map((t) => (
              <label key={t} className="flex h-[16px] items-center gap-[5px] leading-[16px]">
                <input type="checkbox" className="h-[13px] w-[13px] appearance-none border border-[#1c5180] bg-[#f0f0ec]" />
                {t}
              </label>
            ))}
          </div>
          <div className="flex gap-[7px]">
            {[["5274.2", "买入", "text-[#f00]", "text-[#ff4040]"], ["5273.8", "卖出", "text-[#008000]", "text-[#309830]"]].map(([n, t, c1, c2]) => (
              <button key={t} className={`flex h-[60px] w-[76px] flex-col items-center px-[3px] pt-[3px] ${XP}`}>
                <span className={`font-['Liberation_Mono',monospace] text-[15px] leading-[22px] font-bold ${c1}`}>{n}</span>
                <span className="h-px w-full bg-[#aca899]" />
                <span className={`text-[20px] leading-[25px] ${c2}`}>{t}</span>
              </button>
            ))}
          </div>
        </div>
      </div>
    </form>
  );
}

const POS_HEAD = ["序..", "品种", "均价", "今持", "总持", "市价", "浮动盈亏", "保证金", "风险度", "投保", "账户", ""];
const POSITIONS = [
  ["g", "1", "FB07 纤维板1507", "48.20", "-1", "-1", "48.25", "-25.00", "6025.00", "0.0006", "投机", "11"],
  ["g", "2", "J09 焦炭1509", "914.5", "1", "1", "914.0", "-50.00", "8230.50", "0.0009", "投机", "11"],
  ["g", "3", "AG12 白银1512", "3661.00", "1", "1", "3659...", "-30.00", "7138.95", "0.0008", "投机", "11"],
  ["k", "4", "RB10 螺纹钢1510", "2358", "-1", "-1", "2358", "0.00", "2358.00", "0.0002", "投机", "11"],
  ["k", "5", "RU09 橡胶1509", "14495", "1", "1", "14495", "0.00", "20293.00", "0.0021", "投机", "11"],
  ["r", "6", "CF09 棉花1509", "13085", "61", "61", "13090", "1525.00", "359183...", "0.0380", "投机", "11"],
];
const ROW_COLOR = { g: "text-[#008000]", k: "text-black", r: "text-[#f00]" };
const TH = "h-[21px] overflow-hidden border-r border-b border-[#a0a0a0] bg-[#f0f0f0] p-0 pl-[6px] text-left leading-[18px] font-normal whitespace-nowrap";
const TD = "h-[18px] border-r border-b border-[#ebebeb] p-0 pl-[6px] leading-[17px] whitespace-nowrap";
const GAP_TD = "h-[2px] border-r border-b border-[#ebebeb] p-0";

function Positions() {
  return (
    <section className="flex min-w-0 flex-1 flex-col overflow-hidden">
      <div className="flex h-[22px] shrink-0 items-start gap-[7px] pt-px pl-[5px]">
        {[["快捷平仓", "w-[68px]"], ["全部平仓", "w-[68px]"], ["全部账户平仓", "w-[93px]"], ["快捷反手", "w-[68px]"], ["刷新", "w-[38px]"], ["止损止赢", "w-[68px]"], ["条件单", "w-[68px]"]].map(([t, w]) => (
          <button key={t} className={`h-[20px] leading-[16px] whitespace-nowrap ${w} ${XP}`}>{t}</button>
        ))}
      </div>
      <div className="min-h-0 flex-1 border-t border-[#a0a0a0] bg-white">
        <table className="w-full table-fixed border-separate border-spacing-0 text-[12px]">
          <colgroup>
            {["w-[26px]", "w-[225px]", "w-[60px]", "w-[50px]", "w-[50px]", "w-[50px]", "w-[75px]", "w-[65px]", "w-[60px]", "w-[50px]", "w-[70px]", ""].map((w, i) => <col key={i} className={w} />)}
          </colgroup>
          <thead>
            <tr>
              {POS_HEAD.map((t, i) => (
                <th key={i} className={TH}>
                  {i === 1 ? (
                    <span className="flex items-center justify-between pr-[9px]">
                      {t}
                      <svg width="8" height="9" viewBox="0 0 8 9"><path d="M0.500 8.500L4 0.500" stroke="#a0a0a0" fill="none" /><path d="M4 0.500l3.500 8h-7" stroke="#fff" fill="none" /></svg>
                    </span>
                  ) : t}
                </th>
              ))}
            </tr>
          </thead>
          <tbody>
            <tr aria-hidden="true">{POS_HEAD.map((_, i) => <td key={i} className={GAP_TD} />)}</tr>
            {POSITIONS.map(([c, ...cells], r) => (
              <tr key={r} className={ROW_COLOR[c]}>
                {cells.map((v, i) => <td key={i} className={TD}>{v}</td>)}
                <td className={TD} />
              </tr>
            ))}
          </tbody>
        </table>
      </div>
    </section>
  );
}

function Orders() {
  const heads = ["序..", "品种", "方向", "类型", "数量", "限价"];
  return (
    <section className="flex w-[322px] shrink-0 flex-col overflow-hidden">
      <div className="flex h-[22px] shrink-0 items-start gap-[7px] pt-px pl-[21px]">
        {[["撤单", "w-[38px]"], ["全部撤单", "w-[68px]"], ["刷新", "w-[38px]"]].map(([t, w]) => (
          <button key={t} className={`h-[20px] leading-[16px] whitespace-nowrap ${w} ${XP}`}>{t}</button>
        ))}
      </div>
      <div className="min-h-0 flex-1 border-t border-l border-[#a0a0a0] bg-[#f5f5f5] pt-[2px] pr-[2px] pl-[2px]">
        <div className="h-full border-t border-l border-[#808080] bg-white">
          <table className="w-full table-fixed border-separate border-spacing-0 text-[12px]">
            <colgroup>
              {["w-[26px]", "w-[100px]", "w-[45px]", "w-[45px]", "w-[42px]", ""].map((w, i) => <col key={i} className={w} />)}
            </colgroup>
            <thead>
              <tr>{heads.map((t) => <th key={t} className={`${TH} last:border-r-0`}>{t}</th>)}</tr>
            </thead>
            <tbody>
              {[0, 1, 2, 3, 4].map((r) => (
                <tr key={r}>{heads.map((t) => <td key={t} className={`${TD} last:border-r-0`} />)}</tr>
              ))}
              <tr>{heads.map((t) => <td key={t} className="h-[14px] border-r border-[#ebebeb] p-0 last:border-r-0" />)}</tr>
            </tbody>
          </table>
        </div>
      </div>
    </section>
  );
}

/* ---------- messages ---------- */

// Half-width runs are set in a fixed-pitch face beside the full-width text.
function Song({ text, size = "text-[12px]" }) {
  return text.split(/([\x20-\x7e]+)/).map((s, i) =>
    i % 2 ? (
      <span key={i} className={`leading-none whitespace-pre font-['Liberation_Mono',monospace] ${size}`}>{s}</span>
    ) : (
      <span key={i}>{s}</span>
    ),
  );
}

const MESSAGES = [
  ["理论持仓比实际持仓大，需要补仓", false],
  ["正在为您矫正持仓....", false],
  ["来自 “持仓同步” 消息 2015-05-27 09:11:34", true],
  ["【同步】11 : RU09 理论持仓 多1 空0 实际持仓 多0 空0", false],
  ["理论持仓比实际持仓大，需要补仓", false],
  ["正在为您矫正持仓....", false],
];

function Messages() {
  return (
    <section className="mt-[4px] flex min-h-0 flex-1 flex-col">
      <div className="flex h-[20px] shrink-0 items-center justify-between border border-[#a0a0a0] bg-[#c3c3c3] pt-px pr-[3px] pl-[3px] text-[12px]">
        <h2>消息窗口</h2>
        <PanelButtons side />
      </div>
      <div className="mt-[2px] flex min-h-0 flex-1 border-t border-[#a0a0a0] bg-white">
        <div className={`min-w-0 flex-1 pl-[4px] leading-[17px] ${SONG}`}>
          {MESSAGES.map(([t, bold], i) => (
            <p key={i} className={`h-[17px] whitespace-nowrap ${bold ? "text-[14px] font-bold" : "text-[13px]"}`}>
              <Song text={t} size={bold ? "text-[13px]" : "text-[12px]"} />
            </p>
          ))}
        </div>
        <div className="flex w-[16px] shrink-0 flex-col items-center justify-between bg-[#f0f0f0] pt-[7px] pb-[8px]">
          <svg width="7" height="4" viewBox="0 0 7 4"><path d="M0 4L3.500 0 7 4z" fill="#505050" /></svg>
          <div className="flex h-[34px] w-[14px] flex-col items-center justify-center gap-[2px] rounded-[2px] border border-[#979797] bg-linear-to-r from-[#f5f5f5] to-[#cfcfcf]">
            <span className="h-px w-[7px] bg-[#505050]" />
            <span className="h-px w-[7px] bg-[#505050]" />
            <span className="h-px w-[7px] bg-[#505050]" />
          </div>
        </div>
      </div>
    </section>
  );
}

function TradeStatus() {
  return (
    <div role="dialog" aria-label="交易状态" className="absolute top-[286px] left-[48px] w-[578px] border-2 border-t-[#f4f4f4] border-r-[#8c8c8c] border-b-[#8c8c8c] border-l-[#f4f4f4] bg-black p-[4px]">
      <div className="flex h-[24px] items-center justify-between border-2 border-[#f0f0f0] bg-[#bfccdb] pr-[4px] pl-px text-[13px] font-medium">
        <h2>交易状态 - 全部成交 61</h2>
        <div className="flex items-center gap-[9px]">
          <button aria-label="固定"><Pin side /></button>
          <button aria-label="关闭"><Cross /></button>
        </div>
      </div>
    </div>
  );
}

export default function App() {
  return (
    <div className={`relative flex h-screen flex-col overflow-hidden bg-linear-to-r from-[#e0e0e0] to-[#fefefe] text-black ${UI}`}>
      <TitleBar />
      <MenuBar />
      <PageTabs />
      <DrawToolbar />
      <main className="flex h-[517px] shrink-0 gap-[4px]">
        <SidePanel />
        <div className="flex min-w-0 flex-1 flex-col">
          <section className="grid shrink-0 grid-cols-[342fr_342fr_342fr_340fr] border-t border-b border-l-2 border-[#a0a0a0]">
            {PANES.map((p) => <ChartPane key={p.id} p={p} />)}
          </section>
          <div className="mt-[6px] flex min-h-0 flex-1 flex-col bg-[#f0f0f0]">
            <AccountBar />
            <div className="flex min-h-0 flex-1">
              <OrderForm />
              <Positions />
              <div className="w-[4px] shrink-0" />
              <Orders />
            </div>
          </div>
        </div>
      </main>
      <Messages />
      <TradeStatus />
    </div>
  );
}
